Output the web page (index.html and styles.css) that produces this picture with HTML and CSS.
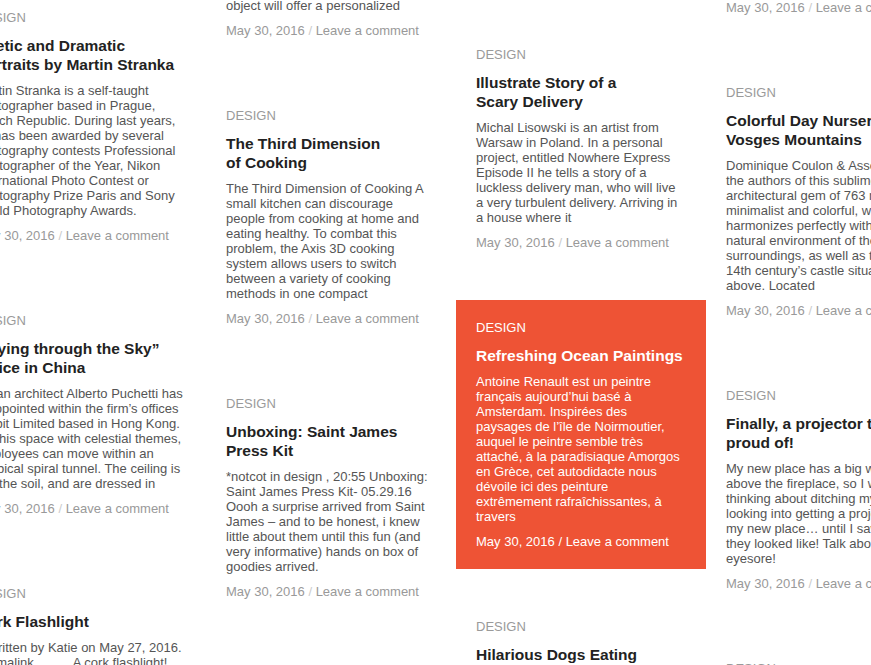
FILE: index.html
```html
<!DOCTYPE html>
<html lang="en">
<head>
<meta charset="utf-8">
<title>Design</title>
<link rel="stylesheet" href="styles.css">
</head>
<body>
<main class="board">
  <section class="col col-1">
    <article class="card">
      <div class="cat">DESIGN</div>
      <h2 class="title">Poetic and Dramatic Portraits by Martin Stranka</h2>
      <p class="excerpt">Martin Stranka is a self-taught photographer based in Prague, Czech Republic. During last years, he has been awarded by several photography contests Professional Photographer of the Year, Nikon International Photo Contest or Photography Prize Paris and Sony World Photography Awards.</p>
      <div class="meta">May 30, 2016 <span class="sep">/</span> Leave a comment</div>
    </article>
    <article class="card">
      <div class="cat">DESIGN</div>
      <h2 class="title">“Flying through the Sky” Office in China</h2>
      <p class="excerpt">Italian architect Alberto Puchetti has reappointed within the firm’s offices Ambit Limited based in Hong Kong. So this space with celestial themes, employees can move within an iambical spiral tunnel. The ceiling is like the soil, and are dressed in</p>
      <div class="meta">May 30, 2016 <span class="sep">/</span> Leave a comment</div>
    </article>
    <article class="card">
      <div class="cat">DESIGN</div>
      <h2 class="title">Cork Flashlight</h2>
      <p class="excerpt excerpt-indent">Written by Katie on May 27, 2016. Permalink<span class="spacer"></span>A cork flashlight! What a simple and clever little object.</p>
      <div class="meta">May 30, 2016 <span class="sep">/</span> Leave a comment</div>
    </article>
  </section>

  <section class="col col-2">
    <article class="card">
      <p class="excerpt">object will offer a personalized</p>
      <div class="meta">May 30, 2016 <span class="sep">/</span> Leave a comment</div>
    </article>
    <article class="card">
      <div class="cat">DESIGN</div>
      <h2 class="title">The Third Dimension<br>of Cooking</h2>
      <p class="excerpt">The Third Dimension of Cooking A small kitchen can discourage people from cooking at home and eating healthy. To combat this problem, the Axis 3D cooking system allows users to switch between a variety of cooking methods in one compact</p>
      <div class="meta">May 30, 2016 <span class="sep">/</span> Leave a comment</div>
    </article>
    <article class="card">
      <div class="cat">DESIGN</div>
      <h2 class="title">Unboxing: Saint James Press Kit</h2>
      <p class="excerpt">*notcot in design , 20:55 Unboxing: Saint James Press Kit- 05.29.16 Oooh a surprise arrived from Saint James – and to be honest, i knew little about them until this fun (and very informative) hands on box of goodies arrived.</p>
      <div class="meta">May 30, 2016 <span class="sep">/</span> Leave a comment</div>
    </article>
    <article class="card">
      <div class="cat">DESIGN</div>
      <h2 class="title">A Lamp Made of Paper</h2>
    </article>
  </section>

  <section class="col col-3">
    <article class="card">
      <div class="cat">DESIGN</div>
      <h2 class="title">Illustrate Story of a<br>Scary Delivery</h2>
      <p class="excerpt">Michal Lisowski is an artist from Warsaw in Poland. In a personal project, entitled Nowhere Express Episode II he tells a story of a luckless delivery man, who will live a very turbulent delivery. Arriving in a house where it</p>
      <div class="meta">May 30, 2016 <span class="sep">/</span> Leave a comment</div>
    </article>
    <article class="card card-hot">
      <div class="cat">DESIGN</div>
      <h2 class="title">Refreshing Ocean Paintings</h2>
      <p class="excerpt">Antoine Renault est un peintre français aujourd’hui basé à Amsterdam. Inspirées des paysages de l’île de Noirmoutier, auquel le peintre semble très attaché, à la paradisiaque Amorgos en Grèce, cet autodidacte nous dévoile ici des peinture extrêmement rafraîchissantes, à travers</p>
      <div class="meta">May 30, 2016 <span class="sep">/</span> Leave a comment</div>
    </article>
    <article class="card">
      <div class="cat">DESIGN</div>
      <h2 class="title">Hilarious Dogs Eating Spaghetti</h2>
    </article>
  </section>

  <section class="col col-4">
    <article class="card">
      <div class="meta">May 30, 2016 <span class="sep">/</span> Leave a comment</div>
    </article>
    <article class="card">
      <div class="cat">DESIGN</div>
      <h2 class="title">Colorful Day Nursery in the Vosges Mountains</h2>
      <p class="excerpt">Dominique Coulon &amp; Associates, the authors of this sublime architectural gem of 763 m², minimalist and colorful, which harmonizes perfectly with the natural environment of the surroundings, as well as the old 14th century’s castle situated just above. Located</p>
      <div class="meta">May 30, 2016 <span class="sep">/</span> Leave a comment</div>
    </article>
    <article class="card">
      <div class="cat">DESIGN</div>
      <h2 class="title">Finally, a projector that I am proud of!</h2>
      <p class="excerpt">My new place has a big white wall above the fireplace, so I was thinking about ditching my TV and looking into getting a projector for my new place… until I saw what they looked like! Talk about an eyesore!</p>
      <div class="meta">May 30, 2016 <span class="sep">/</span> Leave a comment</div>
    </article>
    <article class="card">
      <div class="cat">DESIGN</div>
      <h2 class="title">Minimal Wooden Toys</h2>
    </article>
  </section>
</main>
</body>
</html>
```

FILE: styles.css
```css
html, body {
  margin: 0;
  padding: 0;
  background: #ffffff;
}

body {
  width: 871px;
  height: 665px;
  overflow: hidden;
  font-family: "Liberation Sans", Arial, Helvetica, sans-serif;
  color: #555555;
}

.board {
  display: flex;
  align-items: flex-start;
  margin-left: -44px;
}

.col {
  flex: none;
  width: 250px;
  display: flex;
  flex-direction: column;
  gap: 30px;
}

.col-1 { margin-top: -10.5px; }
.col-2 { margin-top: -22.5px; }
.col-3 { margin-top: 26.5px; }
.col-4 { margin-top: -20.5px; }

.card {
  padding: 20px 22px 20px 20px;
}

.cat {
  font-size: 13px;
  line-height: 15px;
  color: #9a9a9a;
  margin-bottom: 11px;
}

.title {
  margin: 0 0 9px;
  font-size: 15.5px;
  line-height: 19px;
  font-weight: bold;
  color: #222222;
}

.excerpt {
  margin: 0 0 10px;
  font-size: 13px;
  line-height: 15px;
  color: #555555;
}

.excerpt-indent {
  text-indent: 10px;
}

.spacer {
  display: inline-block;
  width: 39px;
}

.meta {
  font-size: 13px;
  line-height: 15px;
  color: #999999;
}

.sep {
  color: #cccccc;
}

.card-hot {
  background: #ee5335;
}

.card-hot .cat,
.card-hot .title,
.card-hot .excerpt,
.card-hot .meta,
.card-hot .sep {
  color: #ffffff;
}
```
